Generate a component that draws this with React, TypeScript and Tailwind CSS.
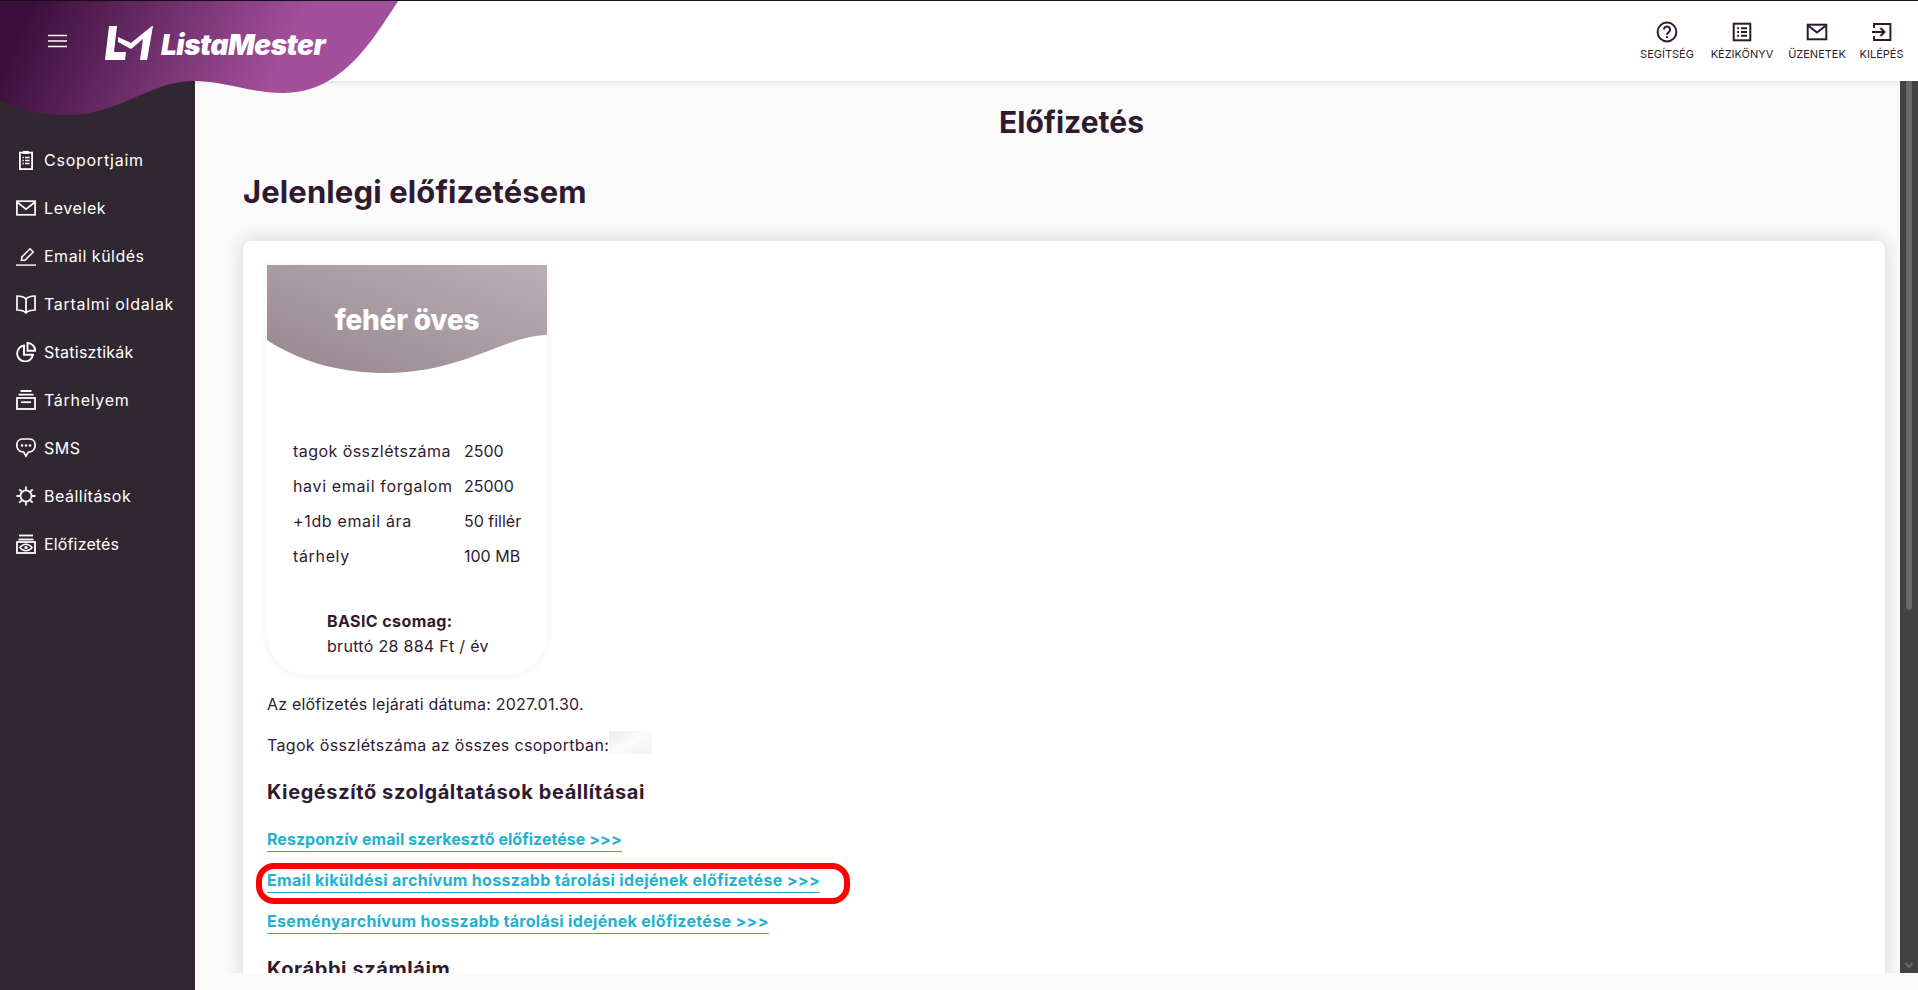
import React from "react";

const S = { fill: "none", stroke: "currentColor", strokeWidth: 1.6 } as const;

const navIcons: Record<string, React.ReactNode> = {
  clip: (
    <svg width="20" height="20" viewBox="0 0 20 20" {...S} strokeWidth={1.8}>
      <rect x="3.9" y="2.6" width="12.2" height="16.5" />
      <rect x="7" y="0.9" width="6" height="3" fill="currentColor" stroke="none" />
      <path d="M6.4 7.6h1.4M9 7.6h4.6M6.4 10.6h1.4M9 10.6h4.6M6.4 13.6h1.4M9 13.6h4.6" strokeWidth="1.5" />
    </svg>
  ),
  mail: (
    <svg width="20" height="20" viewBox="0 0 20 20" {...S} strokeWidth={1.7}>
      <rect x="0.9" y="3.2" width="18.2" height="13.6" />
      <path d="M1 4l9 7.2L19 4" />
    </svg>
  ),
  pen: (
    <svg width="20" height="20" viewBox="0 0 20 20" {...S}>
      <path d="M5.4 14.4l.5-3.4L14 2.8l3.2 3.2-8.2 8.2z" />
      <path d="M0 19.1h20" strokeWidth="1.4" />
    </svg>
  ),
  book: (
    <svg width="20" height="20" viewBox="0 0 20 20" {...S} strokeWidth={1.7}>
      <path d="M10 5C8 2.800 4.500 2 1 2v14c3.500 0 7 .8 9 3 2-2.200 5.500-3 9-3V2c-3.500 0-7 .8-9 3zM10 5v14" />
    </svg>
  ),
  pie: (
    <svg width="20" height="20" viewBox="0 0 20 20" {...S} strokeWidth={1.9}>
      <path d="M8 3.500a8 8 0 1 0 9 9.200H8z" />
      <path d="M11.500 1v7.800h7.700A7.800 7.800 0 0 0 11.500 1z" />
    </svg>
  ),
  box: (
    <svg width="20" height="20" viewBox="0 0 20 20" {...S} strokeWidth={1.8}>
      <path d="M4.500 1h11M2.500 4.600h15" />
      <rect x="1" y="8" width="18" height="11" />
      <path d="M5 12.200h10" />
    </svg>
  ),
  sms: (
    <svg width="20" height="20" viewBox="0 0 20 20" {...S} strokeWidth={1.7}>
      <path d="M6 1h8a5.500 5.500 0 0 1 5.100 5.500v.8A6.200 6.200 0 0 1 13 14h-.6L10 18l-2.400-4H7A6.200 6.200 0 0 1 .9 7.300v-.8A5.500 5.500 0 0 1 6 1z" />
      <circle cx="6" cy="7.500" r="1.300" fill="currentColor" stroke="none" />
      <circle cx="10" cy="7.500" r="1.300" fill="currentColor" stroke="none" />
      <circle cx="14" cy="7.500" r="1.300" fill="currentColor" stroke="none" />
    </svg>
  ),
  gear: (
    <svg width="20" height="20" viewBox="0 0 20 20" {...S} strokeWidth={1.8}>
      <circle cx="10" cy="10" r="5.600" />
      <path d="M10 .5v3.300M10 16.200v3.300M.5 10h3.300M16.200 10h3.300M3.300 3.300l2.400 2.400M14.300 14.300l2.400 2.400M3.300 16.700l2.400-2.400M14.300 5.700l2.400-2.400" />
    </svg>
  ),
  sub: (
    <svg width="20" height="20" viewBox="0 0 20 20" {...S} strokeWidth={1.8}>
      <path d="M3 1.500h14" />
      <path d="M2.500 5.500h15" />
      <rect x="1" y="8" width="18" height="11" />
      <path d="M3.800 13.500C6 11 8 10.200 10 10.200s4 .8 6.200 3.300C14 16 12 16.800 10 16.800S6 16 3.800 13.500z" strokeWidth="1.4" />
      <circle cx="10" cy="13.500" r="1.600" fill="currentColor" stroke="none" />
    </svg>
  ),
};

const nav = [
  ["clip", "Csoportjaim", "tracking-[0.75px]"],
  ["mail", "Levelek", "tracking-[0.6px]"],
  ["pen", "Email küldés", "tracking-[0.5px]"],
  ["book", "Tartalmi oldalak", "tracking-[0.7px]"],
  ["pie", "Statisztikák", "tracking-[0.25px]"],
  ["box", "Tárhelyem", "tracking-[0.7px]"],
  ["sms", "SMS", "tracking-[0.5px]"],
  ["gear", "Beállítások", "tracking-[0.5px]"],
  ["sub", "Előfizetés", "tracking-[0.15px]"],
];

const top = [
  {
    label: "SEGÍTSÉG",
    w: "w-[54px]",
    icon: (
      <svg width="22" height="22" viewBox="0 0 22 22" fill="none" stroke="currentColor" strokeWidth="2">
        <circle cx="11" cy="11" r="9.400" />
        <path d="M7.900 8.600a3.100 3.100 0 1 1 4.900 2.500c-1 .7-1.800 1.300-1.800 2.700" />
        <path d="M11 15.200v1.900" />
      </svg>
    ),
  },
  {
    label: "KÉZIKÖNYV",
    w: "w-[62px]",
    icon: (
      <svg width="22" height="22" viewBox="0 0 22 22" fill="none" stroke="currentColor" strokeWidth="2">
        <rect x="2.700" y="2.700" width="16.600" height="16.600" />
        <path d="M6.200 7.200h1.900M10 7.200h6M6.200 11h1.900M10 11h6M6.200 14.800h1.900M10 14.800h6" />
      </svg>
    ),
  },
  {
    label: "ÜZENETEK",
    w: "w-[54px]",
    icon: (
      <svg width="22" height="22" viewBox="0 0 22 22" fill="none" stroke="currentColor" strokeWidth="2">
        <rect x="1.700" y="3.700" width="18.600" height="14.600" />
        <path d="M2 4.500l9 7 9-7" />
      </svg>
    ),
  },
  {
    label: "KILÉPÉS",
    w: "w-[41px]",
    icon: (
      <svg width="22" height="22" viewBox="0 0 22 22" fill="none" stroke="currentColor" strokeWidth="2">
        <path d="M3 7V3h16.400v16H3v-4" />
        <path d="M1 11h12M9.500 7l4 4-4 4" />
      </svg>
    ),
  },
];

const plan = [
  ["tagok összlétszáma", "2500", "tracking-[0.45px]"],
  ["havi email forgalom", "25000", "tracking-[0.65px]"],
  ["+1db email ára", "50 fillér", "tracking-[0.65px]"],
  ["tárhely", "100 MB", "tracking-[0.65px]"],
];

export default function App() {
  return (
    <div className="relative flex h-[990px] w-full flex-col overflow-hidden bg-[#fafafa] font-[Inter,sans-serif] text-[#2f1a30]">
      <svg className="absolute left-0 top-0 z-10" width="400" height="118" viewBox="0 0 400 118">
        <defs>
          <linearGradient id="wave" gradientUnits="userSpaceOnUse" x1="35" y1="0" x2="265" y2="105">
            <stop offset="0" stopColor="#3b0f3c" />
            <stop offset="1" stopColor="#a44f9b" />
          </linearGradient>
        </defs>
        <path d="M0 0H399C375 35 345 93 283 93C250 93 225 81 193 81C150 81 120 115 67 115C40 115 20 110 0 100Z" fill="url(#wave)" />
      </svg>

      <div className="relative z-20 h-px shrink-0 bg-[#1a0a1e]" />

      <header className="relative flex h-[80px] shrink-0 items-center justify-between bg-white pr-[16px] shadow-[0_1px_4px_rgba(0,0,0,0.12)]">
        <div className="relative z-20 flex items-center pl-[48px]">
          <svg width="20" height="14" viewBox="0 0 20 14" className="text-white" fill="none" stroke="currentColor" strokeWidth="1.600">
            <path d="M0 1.500h19M0 7h19M0 12.500h19" />
          </svg>
          <svg width="50" height="36" viewBox="0 0 50 36" className="ml-[36px] translate-y-[2px] text-white" fill="currentColor">
            <path d="M5 1h8l-3 26h12l-1 8H1z" />
            <path d="M14 12l13 6L48 1l1 0-6 34h-7l3-21-12 10-13-7z" />
          </svg>
          <span className="ml-[7px] translate-y-[4px] text-[28px] font-black italic leading-[30px] tracking-[-0.5px] text-white">ListaMester</span>
        </div>
        <nav className="flex gap-[17px]">
          {top.map((t) => (
            <div key={t.label} className={`flex ${t.w} flex-col items-center`}>
              {t.icon}
              <span className="mt-[3px] whitespace-nowrap text-[11px] leading-[16px]">{t.label}</span>
            </div>
          ))}
        </nav>
      </header>

      <div className="flex min-h-0 flex-1">
        <aside className="w-[195px] shrink-0 bg-[#302730] pt-[55px] text-white">
          {nav.map(([icon, label, track]) => (
            <div key={label} className="flex h-[48px] items-center pl-[16px]">
              <span className="flex w-[20px] justify-center">{navIcons[icon]}</span>
              <span className={`ml-[8px] text-[16px] ${track}`}>{label}</span>
            </div>
          ))}
        </aside>

        <div className="flex min-w-0 flex-1 flex-col">
          <div className="flex h-[892px] shrink-0">
            <main className="min-w-0 flex-1 overflow-hidden pl-[48px]">
              <h1 className="pt-[21px] text-center text-[30px] font-bold leading-[40px]">Előfizetés</h1>
              <h2 className="mt-[28px] text-[31px] font-bold leading-[44px] tracking-[0.12px]">Jelenlegi előfizetésem</h2>
              <section className="mb-[20px] mr-[15px] mt-[27px] rounded-[8px] bg-white pl-[24px] pt-[24px] shadow-[0_0_20px_rgba(0,0,0,0.16)]">
                <div className="w-[280px] rounded-b-[40px] bg-white shadow-[0_0_8px_rgba(0,0,0,0.06)]">
                  <div className="relative flex h-[110px] justify-center">
                    <svg className="absolute inset-0" width="280" height="110" viewBox="0 0 280 110">
                      <defs>
                        <linearGradient id="plan" x1="0" y1="1" x2="1" y2="0">
                          <stop offset="0" stopColor="#96868f" />
                          <stop offset="1" stopColor="#baafb6" />
                        </linearGradient>
                      </defs>
                      <path d="M0 0H280V70C240 70 195 108 120 108C75 108 35 98 0 75Z" fill="url(#plan)" />
                    </svg>
                    <span className="relative mt-[37px] text-[28px] font-extrabold leading-[36px] tracking-[-0.2px] text-white">fehér öves</span>
                  </div>
                  <div className="mt-[59px] grid grid-cols-[171px_1fr] pl-[26px] text-[16px]">
                    {plan.map(([a, b, track]) => (
                      <React.Fragment key={a}>
                        <div className={`whitespace-nowrap leading-[35px] ${track}`}>{a}</div>
                        <div className="whitespace-nowrap leading-[35px]">{b}</div>
                      </React.Fragment>
                    ))}
                  </div>
                  <div className="pb-[16px] pl-[60px] pt-[35px] text-[16px] leading-[25px]">
                    <div className="font-bold tracking-[0.4px]">BASIC csomag:</div>
                    <div className="tracking-[0.3px]">bruttó 28 884 Ft / év</div>
                  </div>
                </div>
                <p className="mt-[17px] text-[16px] leading-[24px] tracking-[0.2px]">Az előfizetés lejárati dátuma: 2027.01.30.</p>
                <div className="mt-[17px] flex items-center text-[16px] leading-[24px] tracking-[0.33px]">
                  <span>Tagok összlétszáma az összes csoportban:</span>
                  <span className="-mt-[5px] h-[23px] w-[43px] bg-gradient-to-br from-[#ececec] via-[#fbfbfb] to-[#f1f1f1]" />
                </div>
                <h3 className="mt-[20px] text-[20px] font-bold leading-[30px] tracking-[0.59px]">Kiegészítő szolgáltatások beállításai</h3>
                <div className="mt-[20px] flex flex-col items-start gap-[16px]">
                  <a className="inline-block h-[25px] border-b border-[#22b1cf] text-[16px] font-bold leading-[24px] tracking-[0.03px] text-[#22b1cf]">Reszponzív email szerkesztő előfizetése &gt;&gt;&gt;</a>
                  <div className="relative">
                    <a className="inline-block h-[25px] border-b border-[#22b1cf] text-[16px] font-bold leading-[24px] tracking-[0.31px] text-[#22b1cf]">Email kiküldési archívum hosszabb tárolási idejének előfizetése &gt;&gt;&gt;</a>
                    <span className="absolute left-[-11px] top-[-5px] h-[41px] w-[594px] rounded-[18px] border-[6px] border-[#ff0000]" />
                  </div>
                  <a className="inline-block h-[25px] border-b border-[#22b1cf] text-[16px] font-bold leading-[24px] tracking-[0.31px] text-[#22b1cf]">Eseményarchívum hosszabb tárolási idejének előfizetése &gt;&gt;&gt;</a>
                </div>
                <h3 className="mt-[20px] text-[20px] font-bold leading-[30px] tracking-[0.59px]">Korábbi számláim</h3>
              </section>
            </main>
            <div className="relative w-[18px] shrink-0 bg-[#424242]">
              <div className="ml-[6px] h-[529px] w-[6px] rounded-b-[3px] bg-[#686868]" />
              <svg className="absolute bottom-[4px] left-[5px]" width="8" height="8" viewBox="0 0 8 8" fill="none" stroke="#686868" strokeWidth="2">
                <path d="M0.500 2l3.500 4 3.500-4" />
              </svg>
            </div>
          </div>
        </div>
      </div>
    </div>
  );
}
